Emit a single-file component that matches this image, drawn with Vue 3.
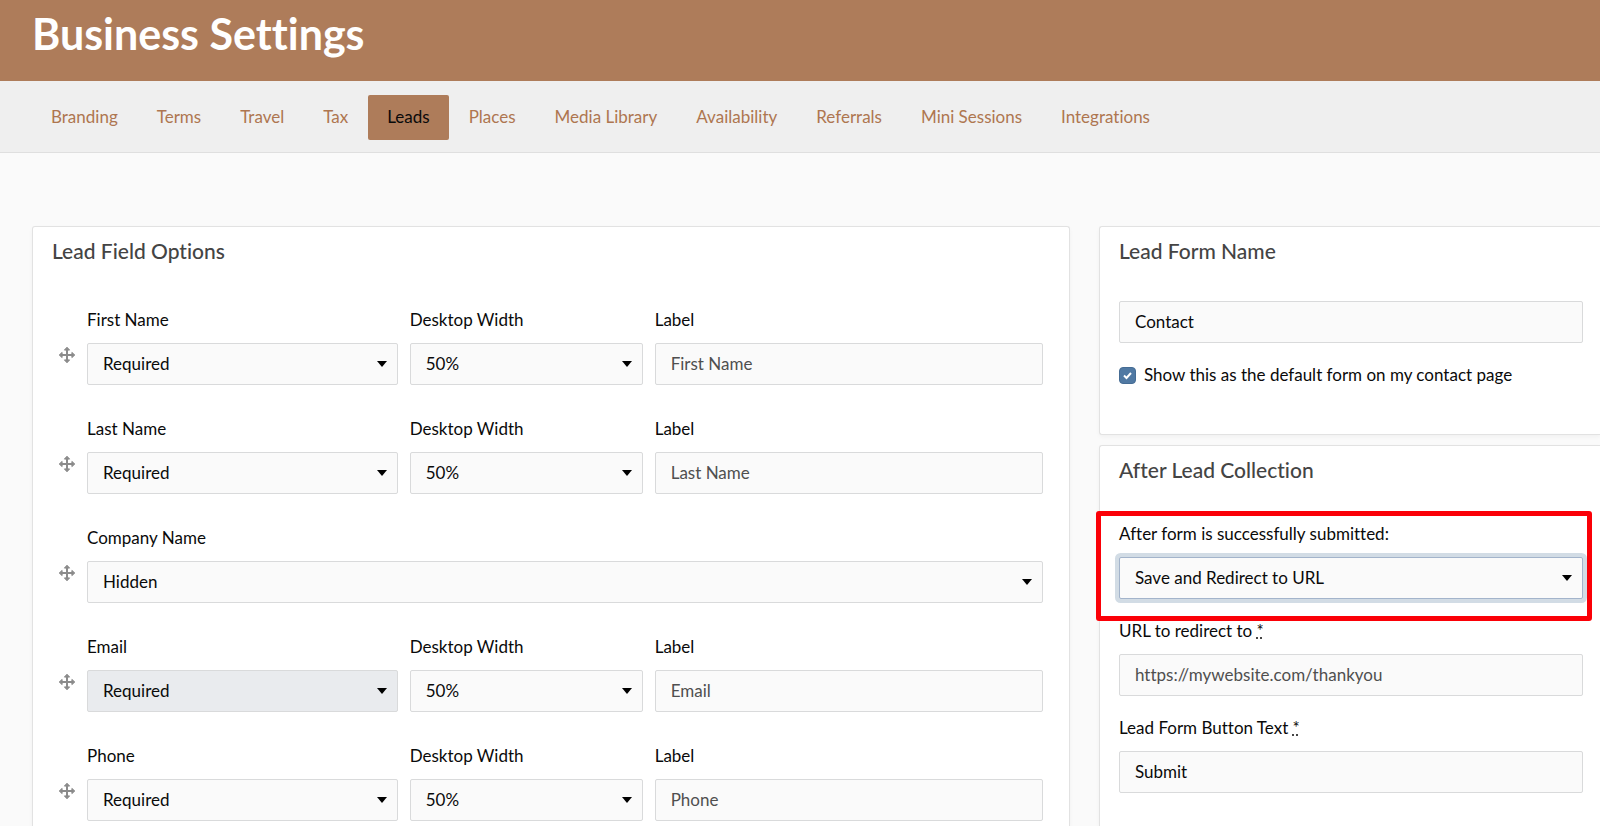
<template>
  <div class="page">
    <header class="page-header">
      <h1>Business Settings</h1>
    </header>

    <nav class="settings-nav">
      <a v-for="tab in tabs" :key="tab" href="#" class="nav-link" :class="{ active: tab === activeTab }" @click.prevent="activeTab = tab">{{ tab }}</a>
    </nav>

    <main class="content">
      <section class="card card-fields">
        <h2>Lead Field Options</h2>
        <div class="field-rows">
          <div v-for="field in fields" :key="field.id" class="field-row">
            <button type="button" class="drag-handle" :aria-label="'Move ' + field.name">
              <svg viewBox="0 0 18 18" width="18" height="18" fill="#8b8b8b" stroke="#8b8b8b" stroke-linejoin="round">
                <path d="M9 3v12M3 9h12" stroke-width="2" />
                <path d="M9 1.2l2.6 2.9H6.4zM9 16.8l2.6-2.9H6.4zM1.2 9l2.9-2.6v5.2zM16.8 9l-2.9-2.6v5.2z" stroke-width="1" />
              </svg>
            </button>
            <div class="field-grid" :class="{ full: !field.width }">
              <div class="form-group">
                <label :for="field.id + '-status'">{{ field.name }}</label>
                <select :id="field.id + '-status'" v-model="field.status" class="form-control" :disabled="field.locked">
                  <option>Required</option>
                  <option>Optional</option>
                  <option>Hidden</option>
                </select>
              </div>
              <div v-if="field.width" class="form-group">
                <label :for="field.id + '-width'">Desktop Width</label>
                <select :id="field.id + '-width'" v-model="field.width" class="form-control">
                  <option>50%</option>
                  <option>100%</option>
                </select>
              </div>
              <div v-if="field.width" class="form-group">
                <label :for="field.id + '-label'">Label</label>
                <input :id="field.id + '-label'" v-model="field.label" type="text" class="form-control" :placeholder="field.name">
              </div>
            </div>
          </div>
        </div>
      </section>

      <div class="sidebar">
        <section class="card card-name">
          <h2 id="form-name-title">Lead Form Name</h2>
          <input v-model="formName" type="text" class="form-control" aria-labelledby="form-name-title">
          <label class="check-label">
            <input v-model="isDefault" type="checkbox">
            <span>Show this as the default form on my contact page</span>
          </label>
        </section>

        <section class="card card-after">
          <h2>After Lead Collection</h2>
          <div class="after-fields">
            <div class="form-group highlight">
              <label for="after-submit">After form is successfully submitted:</label>
              <select id="after-submit" v-model="afterSubmit" class="form-control focused">
                <option>Save and Redirect to URL</option>
                <option>Save and Show Message</option>
              </select>
            </div>
            <div class="form-group">
              <label for="redirect-url">URL to redirect to <abbr title="required">*</abbr></label>
              <input id="redirect-url" v-model="redirectUrl" type="text" class="form-control" placeholder="https://mywebsite.com/thankyou">
            </div>
            <div class="form-group">
              <label for="button-text">Lead Form Button Text <abbr title="required">*</abbr></label>
              <input id="button-text" v-model="buttonText" type="text" class="form-control">
            </div>
          </div>
        </section>
      </div>
    </main>
  </div>
</template>

<script setup>
import { ref } from 'vue'

const tabs = ['Branding', 'Terms', 'Travel', 'Tax', 'Leads', 'Places', 'Media Library', 'Availability', 'Referrals', 'Mini Sessions', 'Integrations']
const activeTab = ref('Leads')

const fields = ref([
  { id: 'first-name', name: 'First Name', status: 'Required', width: '50%', label: '' },
  { id: 'last-name', name: 'Last Name', status: 'Required', width: '50%', label: '' },
  { id: 'company', name: 'Company Name', status: 'Hidden' },
  { id: 'email', name: 'Email', status: 'Required', width: '50%', label: '', locked: true },
  { id: 'phone', name: 'Phone', status: 'Required', width: '50%', label: '' }
])

const formName = ref('Contact')
const isDefault = ref(true)
const afterSubmit = ref('Save and Redirect to URL')
const redirectUrl = ref('')
const buttonText = ref('Submit')
</script>

<style>
body {
  margin: 0;
  background: #fafafa;
}
</style>

<style scoped>
.page {
  display: flex;
  flex-direction: column;
  min-height: 100vh;
  color: #0a0a0a;
  font-family: Lato, "Liberation Sans", sans-serif;
  font-size: 17px;
  line-height: 22px;
  font-variant-ligatures: none;
}

.page * {
  box-sizing: border-box;
}

.page-header {
  padding: 9px 32px 22px;
  background: #ae7c5a;
}

.page-header h1 {
  margin: 0;
  color: #fff;
  font-size: 43px;
  line-height: 50px;
  font-weight: 700;
}

.settings-nav {
  display: flex;
  gap: 1px;
  padding: 14px 32px 12px;
  background: #efefef;
  border-bottom: 1px solid #dfdfdf;
}

.nav-link {
  padding: 11px 19px 12px;
  border-radius: 2px;
  color: #ae7650;
  text-decoration: none;
}

.nav-link.active {
  background: #ae7c5a;
  color: #0a0a0a;
}

.content {
  flex: 1;
  display: grid;
  grid-template-columns: 1038fr 501fr;
  gap: 29px;
  padding: 73px 0 0 32px;
}

.card {
  padding: 11px 26px 0 19px;
  background: #fff;
  border: 1px solid #e2e2e2;
  border-radius: 3px;
  box-shadow: 0 2px 4px rgba(0, 0, 0, 0.04);
}

.card h2 {
  margin: 0 0 40px;
  color: #444;
  font-size: 21px;
  line-height: 26px;
  font-weight: 500;
}

.card-fields {
  border-bottom: 0;
  border-radius: 3px 3px 0 0;
}

.card-fields h2 {
  margin-bottom: 45px;
}

.field-rows {
  display: flex;
  flex-direction: column;
  gap: 33px;
}

.field-row {
  display: flex;
}

.drag-handle {
  flex-shrink: 0;
  align-self: flex-start;
  width: 35px;
  height: 18px;
  margin-top: 37px;
  padding: 0 0 0 6px;
  border: 0;
  background: none;
  cursor: move;
  text-align: left;
}

.drag-handle svg {
  display: block;
}

.field-grid {
  flex: 1;
  display: grid;
  grid-template-columns: 4fr 3fr 5fr;
  gap: 12px;
}

.field-grid.full {
  grid-template-columns: 1fr;
}

.form-group {
  display: flex;
  flex-direction: column;
  gap: 12px;
  min-width: 0;
}

.form-control {
  display: block;
  width: 100%;
  height: 42px;
  margin: 0;
  padding: 0 15px;
  background-color: #fafafa;
  border: 1px solid #d9dadb;
  border-radius: 2px;
  color: #0a0a0a;
  font-family: inherit;
  font-size: 17px;
  line-height: 22px;
  font-variant-ligatures: none;
  outline: none;
}

input.form-control {
  padding-bottom: 1px;
}

.form-control::placeholder {
  color: #4f4f4f;
  opacity: 1;
}

select.form-control {
  appearance: none;
  background-image: url("data:image/svg+xml,%3Csvg xmlns='http://www.w3.org/2000/svg' width='12' height='6'%3E%3Cpath d='M1 0h10L6 6z'/%3E%3C/svg%3E");
  background-repeat: no-repeat;
  background-position: right 9px center;
}

select.form-control:disabled {
  background-color: #e9ebee;
  opacity: 1;
}

.form-control.focused {
  border-color: #a3b4cb;
  box-shadow: 0 0 0 4px #d2dce5;
}

.sidebar {
  display: flex;
  flex-direction: column;
  gap: 10px;
}

.sidebar .card {
  padding-right: 17px;
  padding-left: 19px;
  border-right: 0;
  border-radius: 3px 0 0 3px;
}

.card-name {
  padding-bottom: 48px;
}

.card-name h2 {
  margin-bottom: 37px;
}

.check-label {
  display: flex;
  align-items: center;
  gap: 8px;
  margin-top: 21px;
}

.check-label input {
  appearance: none;
  width: 17px;
  height: 17px;
  margin: 0;
  border: 1px solid #456c94;
  border-radius: 4px;
  background: #fff;
}

.check-label input:checked {
  background: #5079a3 url("data:image/svg+xml,%3Csvg xmlns='http://www.w3.org/2000/svg' width='9' height='9' fill='none' stroke='white' stroke-width='2'%3E%3Cpath d='M1 4.5l2.5 2.5L8 2'/%3E%3C/svg%3E") center no-repeat;
}

.sidebar .card-after {
  flex: 1;
  border-bottom: 0;
  border-radius: 3px 0 0 0;
}

.after-fields {
  display: flex;
  flex-direction: column;
  gap: 21px;
}

.highlight {
  position: relative;
}

.highlight::after {
  content: "";
  position: absolute;
  top: -12px;
  right: -9px;
  bottom: -22px;
  left: -23px;
  border: 5px solid #fb0007;
  border-radius: 3px;
  pointer-events: none;
}

abbr {
  text-decoration: underline dotted;
}
</style>
